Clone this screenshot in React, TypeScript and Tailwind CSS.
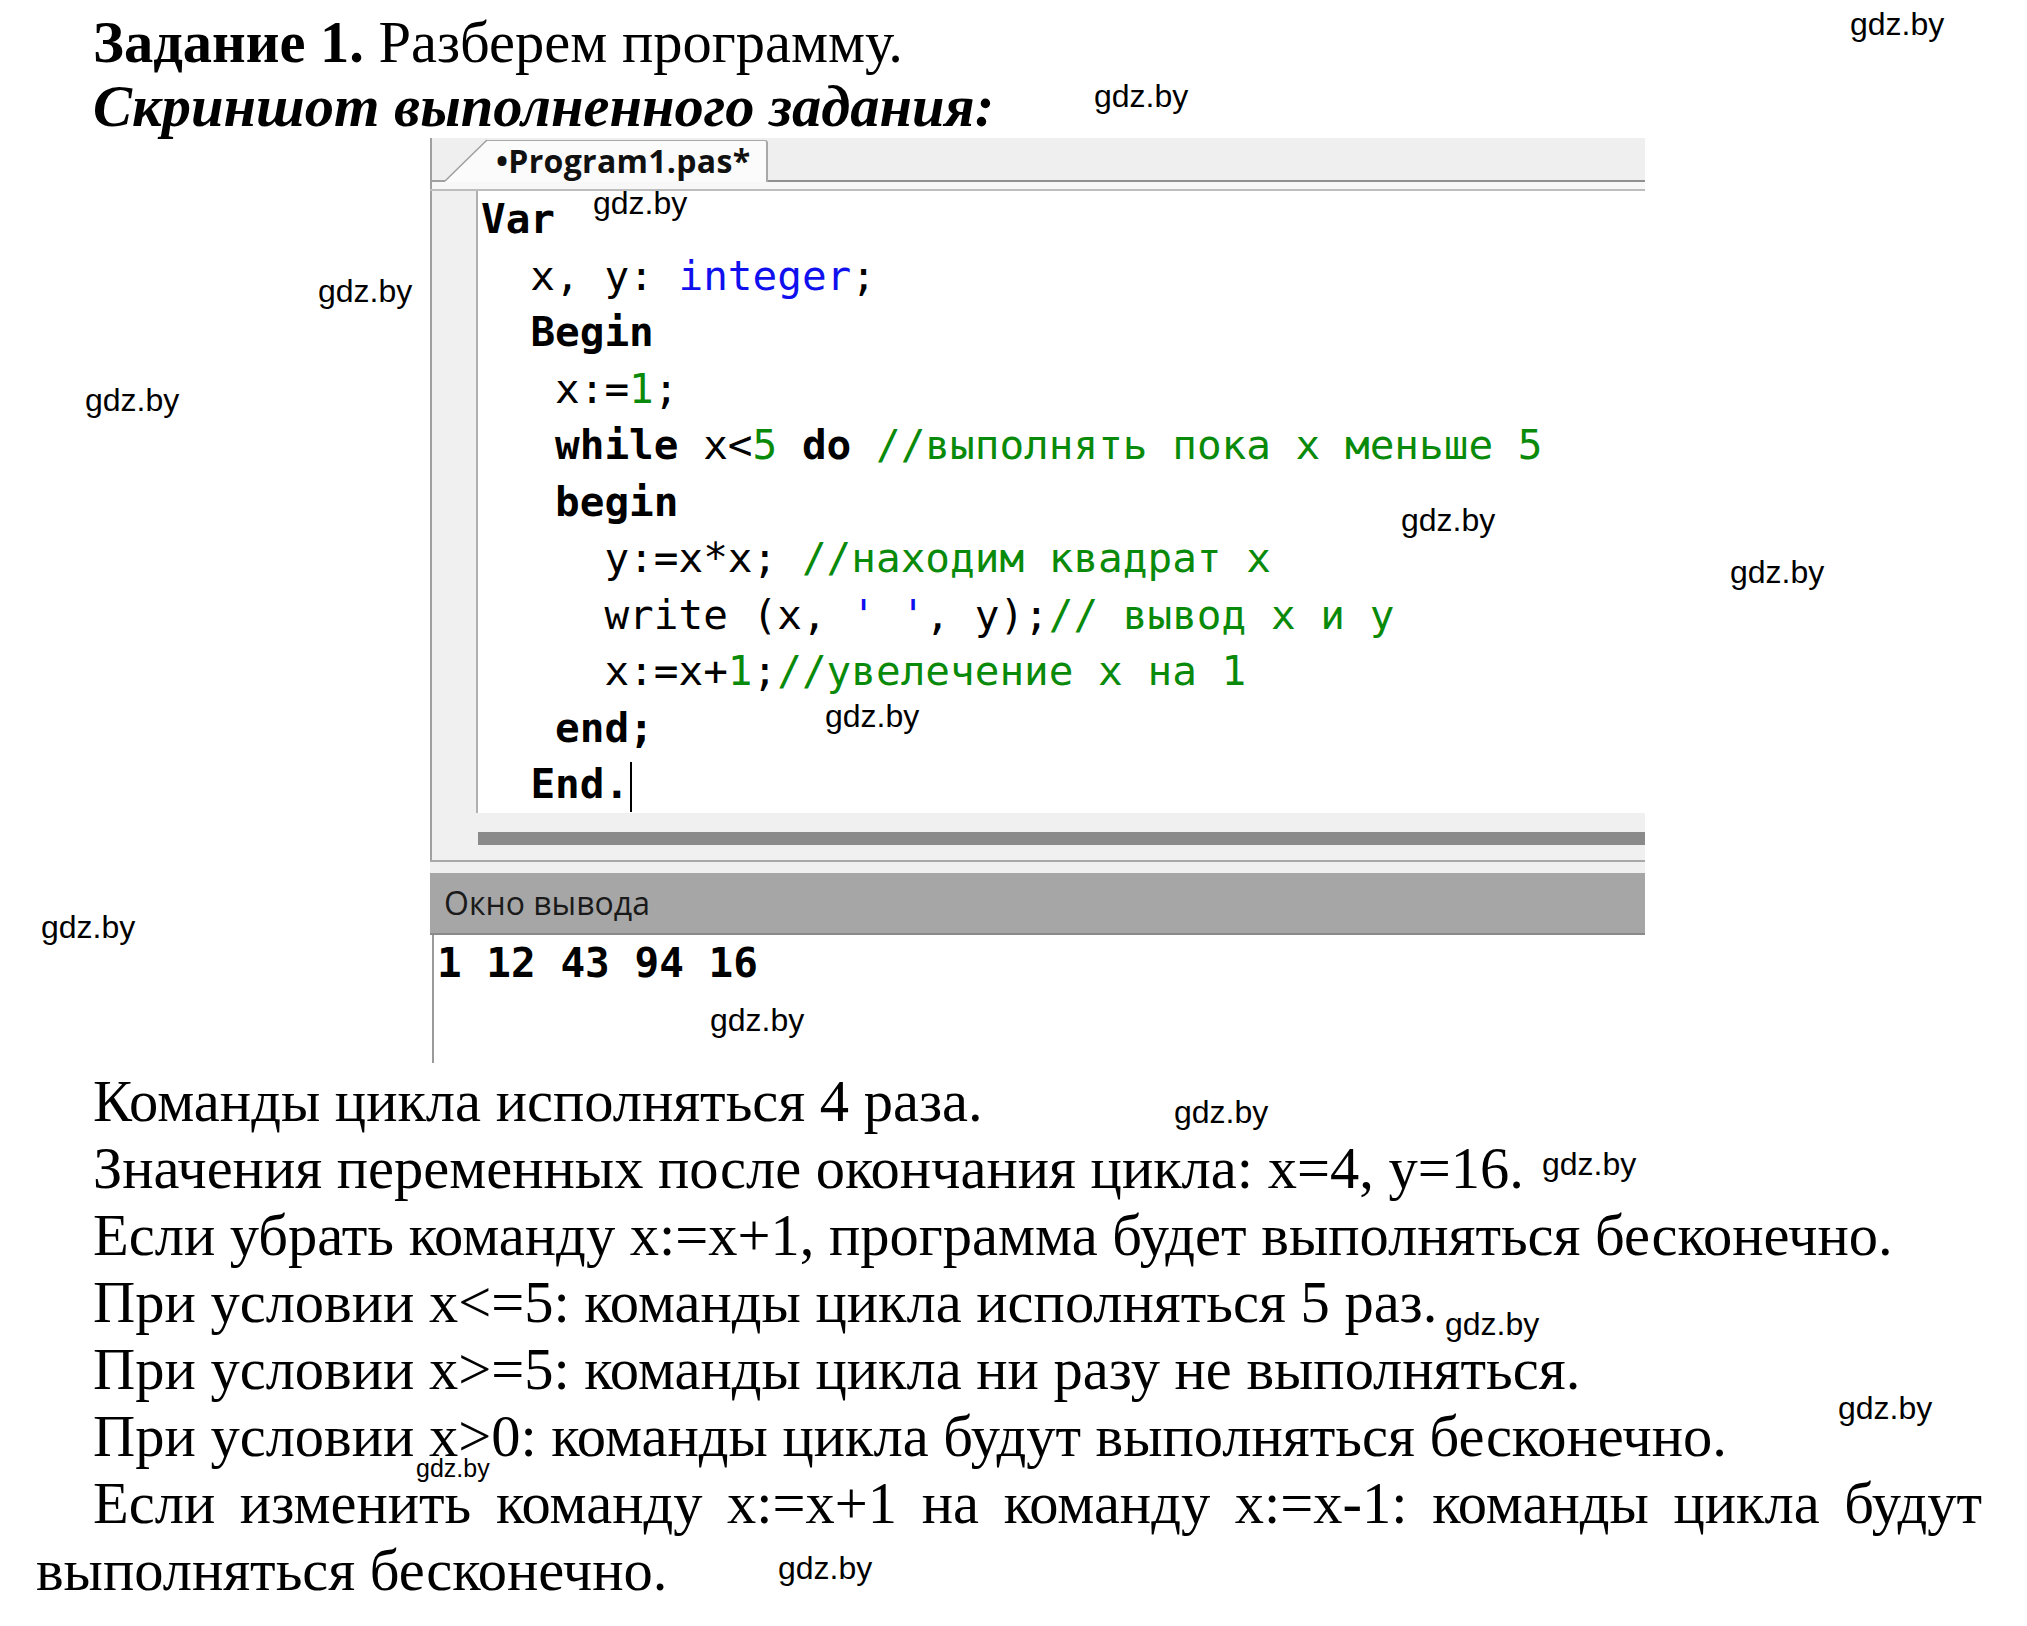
import React from "react";

const serif = { fontFamily: '"Liberation Serif", "Times New Roman", serif' };
const mono = { fontFamily: '"DejaVu Sans Mono", "Liberation Mono", monospace' };
const sans = { fontFamily: '"Open Sans", "Noto Sans", sans-serif' };
const wm = { fontFamily: '"Liberation Sans", Arial, sans-serif' };

const B = ({ children }: { children: React.ReactNode }) => <span className="font-bold">{children}</span>;
const G = ({ children }: { children: React.ReactNode }) => <span className="text-[#0a8a0a]">{children}</span>;
const Bl = ({ children }: { children: React.ReactNode }) => <span className="text-[#1010ee]">{children}</span>;

const marks: { left: number; top: number; size: number }[] = [
  { left: 1850, top: 8, size: 32 },
  { left: 1094, top: 80, size: 32 },
  { left: 593, top: 187, size: 32 },
  { left: 318, top: 275, size: 32 },
  { left: 85, top: 384, size: 32 },
  { left: 1401, top: 504, size: 32 },
  { left: 1730, top: 556, size: 32 },
  { left: 825, top: 700, size: 32 },
  { left: 41, top: 911, size: 32 },
  { left: 710, top: 1004, size: 32 },
  { left: 1174, top: 1096, size: 32 },
  { left: 1542, top: 1148, size: 32 },
  { left: 1445, top: 1308, size: 32 },
  { left: 1838, top: 1392, size: 32 },
  { left: 416, top: 1456, size: 25 },
  { left: 778, top: 1552, size: 32 },
];

export default function App() {
  return (
    <div className="relative w-[2027px] h-[1626px] overflow-hidden bg-white pl-[36px] pr-[45px] text-black">
      {/* heading */}
      <div className="pl-[57px] pt-[11px] text-[58.5px] leading-[64px]" style={serif}>
        <div>
          <span className="font-bold">Задание 1.</span> Разберем программу.
        </div>
        <div className="font-bold italic">Скриншот выполненного задания:</div>
      </div>

      {/* IDE screenshot */}
      <div className="ml-[394px] -mt-[1px] flex w-[1215px] flex-col">
        {/* tab bar */}
        <div className="flex h-[44px] items-stretch bg-[#efefef]">
          <div className="w-[15px] border-l-2 border-b-2 border-[#a0a0a0]" />
          <svg width="42" height="44" viewBox="0 0 42 44" className="block shrink-0">
            <polygon points="0,44 42,2 42,44" fill="#fbfbfb" />
            <line x1="0" y1="43" x2="42" y2="2" stroke="#a0a0a0" strokeWidth="1.6" />
          </svg>
          <div className="mt-[2px] flex w-[281px] items-center rounded-tr-[3px] border-t border-r-2 border-[#a8a8a8] bg-[#fbfbfb] pl-[9px] pb-[2px]">
            <span className="text-[32px] font-bold leading-none tracking-[0.3px] text-[#111]" style={sans}>
              •Program1.pas*
            </span>
          </div>
          <div className="flex-1 border-b-2 border-[#909090]" />
        </div>
        <div className="h-[7px] border-l-2 border-[#a0a0a0] bg-[#f7f7f7]" />
        <div className="h-[2px] bg-[#bdbdbd]" />

        {/* code area */}
        <div className="flex h-[622px] border-l-2 border-[#a0a0a0] bg-white">
          <div className="w-[46px] shrink-0 border-r-2 border-[#b0b0b0] bg-[#f0f0f0]" />
          <div className="pl-[3px] text-[41px] leading-[56.5px] text-black whitespace-pre" style={mono}>
            <div><B>Var</B></div>
            <div>{"  x, y: "}<Bl>integer</Bl>;</div>
            <div>{"  "}<B>Begin</B></div>
            <div>{"   x:="}<G>1</G>;</div>
            <div>{"   "}<B>while</B>{" x<"}<G>5</G>{" "}<B>do</B>{" "}<G>//выполнять пока x меньше 5</G></div>
            <div>{"   "}<B>begin</B></div>
            <div>{"     y:=x*x; "}<G>//находим квадрат x</G></div>
            <div>{"     write (x, "}<Bl>' '</Bl>{", y);"}<G>// вывод x и y</G></div>
            <div>{"     x:=x+"}<G>1</G>;<G>//увелечение x на 1</G></div>
            <div>{"   "}<B>end;</B></div>
            <div>
              {"  "}<B>End.</B>
              <span className="ml-[1px] inline-block h-[50px] w-[2px] bg-black align-middle" />
            </div>
          </div>
        </div>

        {/* horizontal scroll bar */}
        <div className="flex h-[47px] flex-col border-l-2 border-[#a0a0a0] bg-[#f0f0f0] pt-[19px] pl-[46px]">
          <div className="h-[13px] bg-[#8a8a8a]" />
        </div>
        <div className="h-[2px] bg-[#a8a8a8]" />
        <div className="h-[11px] bg-[#f0f0f0]" />

        {/* output window */}
        <div className="flex h-[60px] items-center bg-[#a6a6a6] pl-[14px]">
          <span className="text-[32px] leading-none text-[#1a1a1a]" style={sans}>
            Окно вывода
          </span>
        </div>
        <div className="h-[2px] bg-[#8a8a8a]" />
        <div className="h-[128px] border-l-2 border-[#9a9a9a] ml-[2px] bg-white pl-[3px]">
          <div className="text-[41px] font-bold leading-[56px] whitespace-pre" style={mono}>
            1 12 43 94 16
          </div>
        </div>
      </div>

      {/* answers */}
      <div className="mt-[5px] text-[58.5px] leading-[67px]" style={serif}>
        <p className="indent-[57px]">Команды цикла исполняться 4 раза.</p>
        <p className="indent-[57px]">Значения переменных после окончания цикла: x=4, y=16.</p>
        <p className="indent-[57px]">Если убрать команду x:=x+1, программа будет выполняться бесконечно.</p>
        <p className="indent-[57px]">При условии x&lt;=5: команды цикла исполняться 5 раз.</p>
        <p className="indent-[57px]">При условии x&gt;=5: команды цикла ни разу не выполняться.</p>
        <p className="indent-[57px]">При условии x&gt;0: команды цикла будут выполняться бесконечно.</p>
        <p className="indent-[57px] text-justify">
          Если изменить команду x:=x+1 на команду x:=x-1: команды цикла будут выполняться бесконечно.
        </p>
      </div>

      {/* watermarks */}
      {marks.map((m, i) => (
        <span
          key={i}
          className="pointer-events-none absolute leading-none text-black"
          style={{ ...wm, left: m.left, top: m.top, fontSize: m.size }}
        >
          gdz.by
        </span>
      ))}
    </div>
  );
}
